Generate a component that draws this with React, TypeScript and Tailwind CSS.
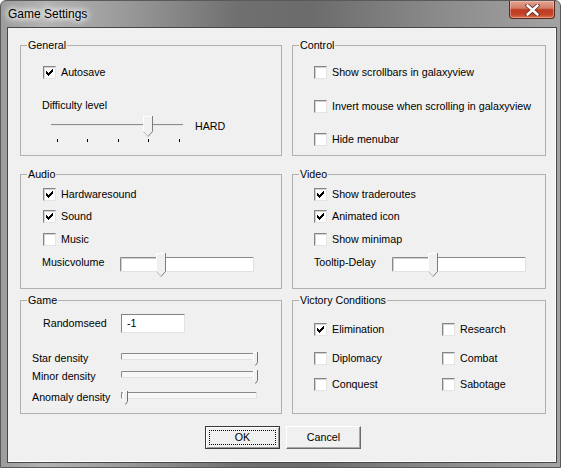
import React from 'react';

type Kids = { children?: React.ReactNode; className?: string };

// classic 7x7 tick bitmap
const Tick = () => (
  <svg width="7" height="7" viewBox="0 0 7 7" shapeRendering="crispEdges">
    <path
      d="M6 0h1v1h-1z M5 1h2v1h-2z M0 2h1v1h-1z M4 2h3v1h-3z M0 3h2v1h-2z M3 3h3v1h-3z M0 4h5v1h-5z M1 5h3v1h-3z M2 6h1v1h-1z"
      fill="#000"
    />
  </svg>
);

const Box = ({ on }: { on?: boolean }) => (
  <span className="flex h-[13px] w-[13px] shrink-0 items-center justify-center border border-t-[#858585] border-l-[#858585] border-r-[#e4e4e4] border-b-[#e4e4e4] bg-white shadow-[inset_1px_1px_0_#d2d2d2]">
    {on && <Tick />}
  </span>
);

const Opt = ({ on, label, className = '' }: { on?: boolean; label: string; className?: string }) => (
  <div className={'flex h-[13px] items-center gap-[5px] ' + className}>
    <Box on={on} />
    <span className="leading-[13px]">{label}</span>
  </div>
);

const Group = ({ title, className = '', children }: Kids & { title: string }) => (
  <fieldset className={'border border-[#b0b0b0] ' + className}>
    <legend className="ml-[6px] px-[1px] leading-[13px]">{title}</legend>
    {children}
  </fieldset>
);

const Thumb = ({ x, top, body, tip }: { x: number; top: number; body: number; tip: number }) => {
  const w = 10;
  const mid = x + w / 2;
  return (
    <g>
      <path d={`M${x} ${top} H${x + w} V${body} L${mid} ${tip} L${x} ${body} Z`} fill="#f0f0f0" />
      <path d={`M${x + 0.5} ${body} V${top + 0.5} H${x + w - 0.5}`} stroke="#fff" fill="none" />
      <path d={`M${x + w - 0.5} ${top} V${body + 0.5} L${mid} ${tip - 0.5}`} stroke="#7c7c7c" fill="none" />
      <path d={`M${x + 0.5} ${body + 0.5} L${mid} ${tip - 0.5}`} stroke="#b9b9b9" fill="none" />
    </g>
  );
};

const Difficulty = () => (
  <svg width="148" height="30" viewBox="0 0 148 30">
    <rect x="7" y="10" width="132" height="1" fill="#8d8d8d" />
    <rect x="7" y="11" width="132" height="1" fill="#e6e6e6" />
    {[13, 43, 74, 104, 135].map((t) => (
      <rect key={t} x={t} y="25" width="1" height="3" fill="#000" />
    ))}
    <Thumb x={99} top={2} body={17} tip={23} />
  </svg>
);

const BoxSlider = () => (
  <svg width="134" height="25" viewBox="0 0 134 25">
    <rect x="0" y="4" width="134" height="15" fill="#fff" />
    <path d="M0.5 18.5 V4.5 H133.5" stroke="#8a8a8a" fill="none" />
    <path d="M133.5 4.5 V18.5 H0.5" stroke="#e2e2e2" fill="none" />
    <path d="M1.5 17.5 V5.5 H36" stroke="#d0d0d0" fill="none" />
    <Thumb x={36} top={0} body={18} tip={24} />
  </svg>
);

const Density = ({ at }: { at: number }) => (
  <svg width="140" height="16" viewBox="0 0 140 16">
    <rect x="0" y="2" width="136" height="7" fill="#f7f7f7" />
    <path d="M0.5 8.5 V2.5 H135.5" stroke="#8a8a8a" fill="none" />
    <path d="M135.5 2.5 V8.5 H0.5" stroke="#e2e2e2" fill="none" />
    <path d={`M${at} 1 H${at + 5} V11 L${at + 2.5} 14 L${at} 11 Z`} fill="#f0f0f0" />
    <path d={`M${at + 0.5} 11 V1.5 H${at + 4.5}`} stroke="#fff" fill="none" />
    <path d={`M${at + 4.5} 1 V11.5 L${at + 2.5} 14.5`} stroke="#707070" fill="none" />
  </svg>
);

const Button = ({ label, main }: { label: string; main?: boolean }) => (
  <button
    className={
      'flex h-[23px] w-[75px] items-center justify-center bg-[#f0f0f0] p-[3px] leading-[13px] ' +
      (main
        ? 'border border-[#3a3a3a] shadow-[inset_1px_1px_0_#fff,inset_-1px_-1px_0_#9a9a9a]'
        : 'border border-t-white border-l-white border-r-[#6b6b6b] border-b-[#6b6b6b] shadow-[inset_-1px_-1px_0_#a8a8a8]')
    }
  >
    <span
      className={
        'flex h-full w-full items-center justify-center ' + (main ? 'border border-dotted border-black' : '')
      }
    >
      {label}
    </span>
  </button>
);

const CloseButton = () => (
  <div className="mr-[5px] flex h-[18px] w-[46px] items-center justify-center rounded-b-[4px] border border-t-0 border-[#5d271c] bg-[linear-gradient(180deg,#e4a493_0%,#d27d66_42%,#bd3b22_52%,#c4452a_80%,#d8744f_100%)] shadow-[inset_0_0_0_1px_rgba(255,210,200,0.45)]">
    <svg width="15" height="12" viewBox="0 0 15 12">
      <path d="M2.5 1.5 L12.5 10.5 M12.5 1.5 L2.5 10.5" stroke="#5a2418" strokeWidth="4.2" strokeLinecap="round" />
      <path d="M2.5 1.5 L12.5 10.5 M12.5 1.5 L2.5 10.5" stroke="#fff" strokeWidth="2.6" strokeLinecap="round" />
    </svg>
  </div>
);

export default function App() {
  return (
    <div className="h-[468px] w-[561px] overflow-hidden bg-white font-['Liberation_Sans',Arial,sans-serif] text-[10.7px] text-black">
      <div className="flex h-full flex-col rounded-t-[6px] border border-[#5a5a5a] bg-[linear-gradient(90deg,#9c9c9c_0%,#b3b3b3_8%,#9a9a9a_22%,#707070_42%,#6b6b6b_55%,#8a8a8a_78%,#a3a3a3_100%)]">
        {/* title bar */}
        <div className="flex h-[26px] shrink-0 items-start">
          <span className="pl-[7px] pt-[6px] text-[12px] leading-[14px] [text-shadow:0_0_6px_#fff,0_0_6px_#fff,0_0_10px_#fff]">
            Game Settings
          </span>
          <div className="ml-auto">
            <CloseButton />
          </div>
        </div>

        {/* client area */}
        <div className="mb-[4px] ml-[6px] mr-[3px] flex-1 border border-[#474747] bg-[#f0f0f0] pl-[12px] pt-[11px] shadow-[inset_-1px_-1px_0_#fff]">
          <div className="flex gap-[10px]">
            <Group title="General" className="h-[117px] w-[262px]">
              <div className="pl-[22px] pt-[14px]">
                <Opt on label="Autosave" />
              </div>
              <div className="mt-[20px] pl-[21px] leading-[13px]">Difficulty level</div>
              <div className="mt-[2px] flex items-start pl-[23px]">
                <Difficulty />
                <span className="ml-[3px] mt-[6px] leading-[13px]">HARD</span>
              </div>
            </Group>
            <Group title="Control" className="h-[117px] w-[254px]">
              <div className="flex flex-col pl-[21px]">
                <Opt className="mt-[14px]" label="Show scrollbars in galaxyview" />
                <Opt className="mt-[21px]" label="Invert mouse when scrolling in galaxyview" />
                <Opt className="mt-[20px]" label="Hide menubar" />
              </div>
            </Group>
          </div>

          <div className="mt-[12px] flex gap-[10px]">
            <Group title="Audio" className="h-[121px] w-[262px]">
              <div className="flex flex-col pl-[22px]">
                <Opt on className="mt-[7px]" label="Hardwaresound" />
                <Opt on className="mt-[9px]" label="Sound" />
                <Opt className="mt-[10px]" label="Music" />
              </div>
              <div className="mt-[7px] flex items-start pl-[21px]">
                <span className="mt-[3px] w-[78px] leading-[13px]">Musicvolume</span>
                <BoxSlider />
              </div>
            </Group>
            <Group title="Video" className="h-[121px] w-[254px]">
              <div className="flex flex-col pl-[21px]">
                <Opt on className="mt-[7px]" label="Show traderoutes" />
                <Opt on className="mt-[9px]" label="Animated icon" />
                <Opt className="mt-[10px]" label="Show minimap" />
              </div>
              <div className="mt-[7px] flex items-start pl-[21px]">
                <span className="mt-[3px] w-[78px] leading-[13px]">Tooltip-Delay</span>
                <BoxSlider />
              </div>
            </Group>
          </div>

          <div className="mt-[5px] flex gap-[10px]">
            <Group title="Game" className="h-[120px] w-[262px]">
              <div className="mt-[7px] flex h-[19px] items-center pl-[22px]">
                <span className="w-[78px] leading-[13px]">Randomseed</span>
                <div className="flex h-[19px] w-[64px] items-center border border-t-[#828282] border-l-[#828282] border-r-[#e3e3e3] border-b-[#e3e3e3] bg-white pl-[5px] leading-[13px]">
                  -1
                </div>
              </div>
              <div className="mt-[18px] flex items-start pl-[11px]">
                <span className="mt-[1px] w-[89px] leading-[13px]">Star density</span>
                <Density at={132} />
              </div>
              <div className="mt-[2px] flex items-start pl-[11px]">
                <span className="mt-[1px] w-[89px] leading-[13px]">Minor density</span>
                <Density at={132} />
              </div>
              <div className="mt-[5px] flex items-start pl-[11px]">
                <span className="mt-[1px] w-[89px] leading-[13px]">Anomaly density</span>
                <Density at={2} />
              </div>
            </Group>
            <Group title="Victory Conditions" className="h-[120px] w-[254px]">
              <div className="grid grid-cols-[128px_1fr] pl-[21px]">
                <Opt on className="mt-[16px]" label="Elimination" />
                <Opt className="mt-[16px]" label="Research" />
                <Opt className="mt-[16px]" label="Diplomacy" />
                <Opt className="mt-[16px]" label="Combat" />
                <Opt className="mt-[13px]" label="Conquest" />
                <Opt className="mt-[13px]" label="Sabotage" />
              </div>
            </Group>
          </div>

          <div className="mt-[12px] flex gap-[6px] pl-[185px]">
            <Button main label="OK" />
            <Button label="Cancel" />
          </div>
        </div>
      </div>
    </div>
  );
}
